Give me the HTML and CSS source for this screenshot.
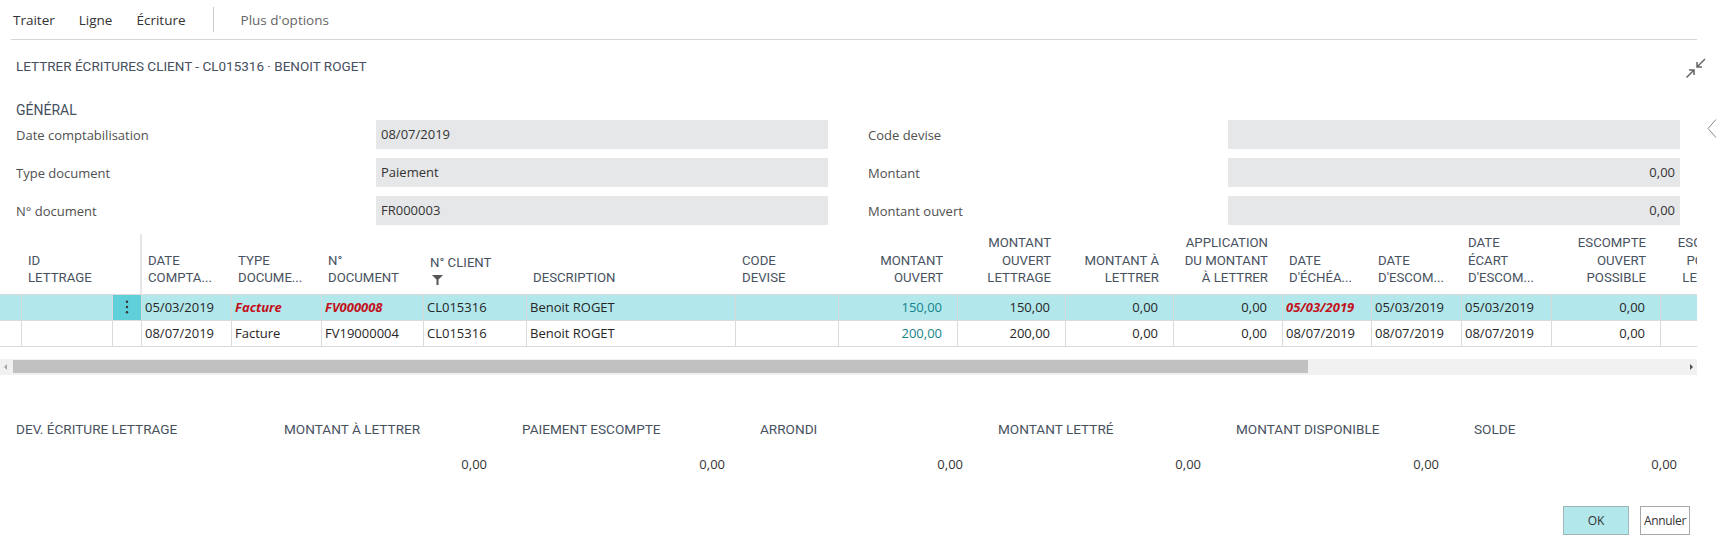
FILE: index.html
```html
<!DOCTYPE html>
<html lang="fr">

<head>
    <meta charset="UTF-8">
    <title>Lettrer écritures client</title>
    <link rel="stylesheet" href="styles.css">
</head>

<body>
<div class="page">
    <div class="main">
        <!-- Action bar -->
        <nav class="actions">
            <a href="#">Traiter</a>
            <a href="#">Ligne</a>
            <a href="#">Écriture</a>
            <span class="sep"></span>
            <a href="#" class="more">Plus d'options</a>
        </nav>

        <div class="title-row">
            <h1>Lettrer écritures client - CL015316 · Benoit ROGET</h1>
            <svg class="collapse" width="20" height="20" viewBox="0 0 20 20">
                <path d="M19 1 L11 9 M11 4 L11 9 L16 9" />
                <path d="M0.5 19.5 L8 12 M3 12 L8 12 L8 17" />
            </svg>
        </div>

        <!-- General -->
        <h2>Général</h2>
        <div class="fields">
            <div class="field"><label>Date comptabilisation</label><div class="box">08/07/2019</div></div>
            <div class="field"><label>Code devise</label><div class="box"></div></div>
            <div class="field"><label>Type document</label><div class="box">Paiement</div></div>
            <div class="field"><label>Montant</label><div class="box num">0,00</div></div>
            <div class="field"><label>N° document</label><div class="box">FR000003</div></div>
            <div class="field"><label>Montant ouvert</label><div class="box num">0,00</div></div>
        </div>

        <!-- Lines -->
        <div class="grid-wrap">
            <table class="lines">
                <colgroup>
                    <col style="width:22px"><col style="width:91px"><col style="width:29px">
                    <col style="width:90px"><col style="width:90px"><col style="width:102px">
                    <col style="width:103px"><col style="width:209px"><col style="width:103px">
                    <col style="width:119px"><col style="width:108px"><col style="width:108px">
                    <col style="width:109px"><col style="width:89px"><col style="width:90px">
                    <col style="width:90px"><col style="width:109px"><col style="width:100px">
                </colgroup>
                <thead>
                    <tr>
                        <th></th>
                        <th>ID<br>LETTRAGE</th>
                        <th class="frozen"></th>
                        <th>DATE<br>COMPTA...</th>
                        <th>TYPE<br>DOCUME...</th>
                        <th>N°<br>DOCUMENT</th>
                        <th>N° CLIENT<br>
                            <svg class="funnel" width="11" height="10" viewBox="0 0 11 10"><path d="M0 0 H11 L6.5 4.5 V10 H4.5 V4.5 Z" /></svg>
                        </th>
                        <th>DESCRIPTION</th>
                        <th>CODE<br>DEVISE</th>
                        <th class="num">MONTANT<br>OUVERT</th>
                        <th class="num">MONTANT<br>OUVERT<br>LETTRAGE</th>
                        <th class="num">MONTANT À<br>LETTRER</th>
                        <th class="num">APPLICATION<br>DU MONTANT<br>À LETTRER</th>
                        <th>DATE<br>D'ÉCHÉA...</th>
                        <th>DATE<br>D'ESCOM...</th>
                        <th>DATE<br>ÉCART<br>D'ESCOM...</th>
                        <th class="num">ESCOMPTE<br>OUVERT<br>POSSIBLE</th>
                        <th class="num">ESCOMPTE<br>POSSIBLE<br>LETTRAGE</th>
                    </tr>
                </thead>
                <tbody>
                    <tr class="selected">
                        <td></td>
                        <td></td>
                        <td class="dots">
                            <svg width="4" height="14" viewBox="0 0 4 14"><circle cx="2" cy="1.8" r="1.2" /><circle cx="2" cy="7" r="1.2" /><circle cx="2" cy="12.2" r="1.2" /></svg>
                        </td>
                        <td>05/03/2019</td>
                        <td class="late">Facture</td>
                        <td class="late">FV000008</td>
                        <td>CL015316</td>
                        <td>Benoit ROGET</td>
                        <td></td>
                        <td class="num link">150,00</td>
                        <td class="num">150,00</td>
                        <td class="num">0,00</td>
                        <td class="num">0,00</td>
                        <td class="late">05/03/2019</td>
                        <td>05/03/2019</td>
                        <td>05/03/2019</td>
                        <td class="num">0,00</td>
                        <td></td>
                    </tr>
                    <tr>
                        <td></td>
                        <td></td>
                        <td></td>
                        <td>08/07/2019</td>
                        <td>Facture</td>
                        <td>FV19000004</td>
                        <td>CL015316</td>
                        <td>Benoit ROGET</td>
                        <td></td>
                        <td class="num link">200,00</td>
                        <td class="num">200,00</td>
                        <td class="num">0,00</td>
                        <td class="num">0,00</td>
                        <td>08/07/2019</td>
                        <td>08/07/2019</td>
                        <td>08/07/2019</td>
                        <td class="num">0,00</td>
                        <td></td>
                    </tr>
                </tbody>
            </table>
        </div>
        <div class="hscroll">
            <span class="arrow-left"></span>
            <span class="thumb"></span>
            <span class="arrow-right"></span>
        </div>

        <!-- Totals -->
        <div class="totals">
            <div class="total"><div class="cap">Dev. écriture lettrage</div><div class="val"></div></div>
            <div class="total"><div class="cap">Montant à lettrer</div><div class="val">0,00</div></div>
            <div class="total"><div class="cap">Paiement escompte</div><div class="val">0,00</div></div>
            <div class="total"><div class="cap">Arrondi</div><div class="val">0,00</div></div>
            <div class="total"><div class="cap">Montant lettré</div><div class="val">0,00</div></div>
            <div class="total"><div class="cap">Montant disponible</div><div class="val">0,00</div></div>
            <div class="total"><div class="cap">Solde</div><div class="val">0,00</div></div>
        </div>

        <div class="buttons">
            <button class="btn btn-ok">OK</button>
            <button class="btn">Annuler</button>
        </div>
    </div>

    <aside class="side">
        <svg width="10" height="19" viewBox="0 0 10 19"><polyline points="9,0.5 1,9.5 9,18.5" /></svg>
    </aside>
</div>
</body>

</html>
```

FILE: styles.css
```css
body {
    margin: 0;
    font-family: "Open Sans", "Liberation Sans", sans-serif;
    font-size: 13px;
    color: #212121;
    background-color: #fff;
}

.page {
    display: flex;
    width: 1719px;
    height: 550px;
    overflow: hidden;
}

.main {
    width: 1697px;
    flex: none;
}

.side {
    flex: 1;
    padding: 119px 0 0 10px;
}

.side polyline {
    fill: none;
    stroke: #8a8a8a;
    stroke-width: 1;
}

/* Action bar */
.actions {
    display: flex;
    align-items: center;
    height: 39px;
    margin-left: 11px;
    padding-left: 2px;
    border-bottom: 1px solid #d6d6db;
    font-size: 13.5px;
}

.actions a {
    color: #333;
    text-decoration: none;
    margin-right: 24px;
}

.actions a.more {
    color: #666;
}

.actions .sep {
    width: 1px;
    height: 25px;
    background-color: #c8c8c8;
    margin: 0 27px 0 3px;
}

/* Title */
.title-row {
    display: flex;
    justify-content: space-between;
    align-items: center;
    height: 20px;
    padding: 16px 0 0 16px;
}

h1,
h2,
.lines th,
.total .cap {
    font-family: Roboto, "DejaVu Sans", sans-serif;
    font-weight: 400;
    text-transform: uppercase;
}

h1 {
    margin: 0;
    font-size: 13.5px;
    line-height: 20px;
    color: #46505e;
}

.collapse {
    margin: 4px -9px 0 0;
}

.collapse path {
    fill: none;
    stroke: #666;
    stroke-width: 1.5;
}

h2 {
    margin: 24px 0 0 16px;
    font-size: 14px;
    line-height: 20px;
    color: #46505e;
}

/* General fields */
.fields {
    display: grid;
    grid-template-columns: 812px 812px;
    column-gap: 40px;
    row-gap: 9px;
    padding-left: 16px;
}

.field {
    display: grid;
    grid-template-columns: 360px 452px;
    align-items: center;
}

.field label {
    color: #505050;
}

.field .box {
    height: 29px;
    line-height: 29px;
    padding: 0 5px;
    box-sizing: border-box;
    background-color: #e6e7e8;
    color: #333;
}

.field .box.num {
    text-align: right;
}

/* Lines grid */
.grid-wrap {
    width: 1697px;
    overflow: hidden;
    margin-top: 9px;
}

.lines {
    table-layout: fixed;
    width: 1761px;
    border-collapse: separate;
    border-spacing: 0;
}

.lines th {
    height: 60px;
    box-sizing: border-box;
    padding: 0 6px 7px;
    font-size: 13.2px;
    line-height: 17.5px;
    color: #48525f;
    text-align: left;
    vertical-align: bottom;
    white-space: nowrap;
    overflow: hidden;
    border-bottom: 1px solid #dadada;
}

.lines th.num {
    text-align: right;
    padding-right: 15px;
}

.lines th.frozen {
    border-right: 2px solid #e6e6e6;
}

.funnel {
    display: block;
    margin: 3px 0 2px 2px;
}

.funnel path {
    fill: #555;
}

.lines tbody tr {
    height: 26px;
}

.lines td {
    padding: 0 3px;
    border-right: 1px solid #dadada;
    border-bottom: 1px solid #dadada;
    white-space: nowrap;
    overflow: hidden;
    color: #262626;
}

.lines td.num {
    text-align: right;
    padding-right: 15px;
}

.lines tr.selected td {
    background-color: #b2e7eb;
}

.lines tr.selected td.dots {
    background-color: #5fd0d9;
    text-align: center;
    padding: 0;
}

.dots svg {
    display: block;
    margin: 0 auto;
}

.dots circle {
    fill: #333;
}

.lines td.late {
    color: #c3111c;
    font-weight: 700;
    font-style: italic;
}

.lines td.link {
    color: #13858c;
}

/* Horizontal scrollbar */
.hscroll {
    display: flex;
    align-items: center;
    height: 16px;
    margin-top: 12px;
    background-color: #f1f1f1;
}

.arrow-left {
    width: 0;
    height: 0;
    margin-left: 4px;
    border-top: 3px solid transparent;
    border-bottom: 3px solid transparent;
    border-right: 3px solid #a8a8a8;
}

.thumb {
    width: 1295px;
    height: 13px;
    margin-left: 6px;
    background-color: #c1c1c1;
}

.arrow-right {
    width: 0;
    height: 0;
    margin: 0 4px 0 auto;
    border-top: 3px solid transparent;
    border-bottom: 3px solid transparent;
    border-left: 3px solid #505050;
}

/* Totals */
.totals {
    display: grid;
    grid-template-columns: 233px repeat(6, 203px);
    column-gap: 35px;
    padding-left: 16px;
    margin-top: 45px;
}

.total .cap {
    font-size: 13.6px;
    line-height: 18px;
    color: #48525f;
}

.total .val {
    height: 18px;
    line-height: 18px;
    margin-top: 17px;
    text-align: right;
    color: #333;
}

/* Buttons */
.buttons {
    display: flex;
    justify-content: flex-end;
    gap: 11px;
    margin-top: 33px;
    padding-right: 7px;
}

.btn {
    height: 29px;
    box-sizing: border-box;
    padding: 0;
    border: 1px solid #a8a8a8;
    background-color: #fff;
    font-family: "Open Sans", "Liberation Sans", sans-serif;
    font-size: 12px;
    color: #333;
    cursor: pointer;
}

.btn-ok {
    width: 66px;
    background-color: #b2e7eb;
    border-color: #9fb5b8;
}

.btn + .btn {
    width: 50px;
    letter-spacing: -0.3px;
}
```
